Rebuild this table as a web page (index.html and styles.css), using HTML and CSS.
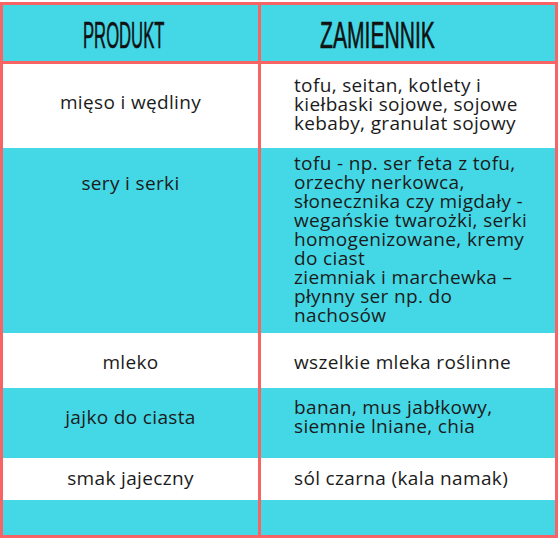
FILE: index.html
```html
<!DOCTYPE html>
<html lang="pl">
<head>
<meta charset="utf-8">
<link rel="stylesheet" href="styles.css">
</head>
<body>
<div class="table">
  <div class="row head">
    <div class="cell left"><span class="title title-produkt">PRODUKT</span></div>
    <div class="cell right"><span class="title title-zam">ZAMIENNIK</span></div>
  </div>
  <div class="row white r1">
    <div class="cell left center">mięso i wędliny</div>
    <div class="cell right">tofu, seitan, kotlety i<br>kiełbaski sojowe, sojowe<br>kebaby, granulat sojowy</div>
  </div>
  <div class="row cyan r2">
    <div class="cell left top">sery i serki</div>
    <div class="cell right">tofu - np. ser feta z tofu,<br>orzechy nerkowca,<br>słonecznika czy migdały -<br>wegańskie twarożki, serki<br>homogenizowane, kremy<br>do ciast<br>ziemniak i marchewka –<br>płynny ser np. do<br>nachosów</div>
  </div>
  <div class="row white r3">
    <div class="cell left center">mleko</div>
    <div class="cell right">wszelkie mleka roślinne</div>
  </div>
  <div class="row cyan r4">
    <div class="cell left center">jajko do ciasta</div>
    <div class="cell right">banan, mus jabłkowy,<br>siemnie lniane, chia</div>
  </div>
  <div class="row white r5">
    <div class="cell left center">smak jajeczny</div>
    <div class="cell right">sól czarna (kala namak)</div>
  </div>
  <div class="row cyan r6">
    <div class="cell left"></div>
    <div class="cell right"></div>
  </div>
</div>
</body>
</html>
```
FILE: styles.css
```css
html, body {
  margin: 0;
  padding: 0;
  background: #ffffff;
}
body {
  width: 560px;
  height: 542px;
  overflow: hidden;
  font-family: "Open Sans", Lato, sans-serif;
  color: #1b1b1b;
}
.table {
  margin-top: 2px;
  width: 552px;
  border: 3px solid #f86464;
  display: flex;
  flex-direction: column;
}
.row {
  display: grid;
  grid-template-columns: 258px 291px;
  column-gap: 0;
}
.cell {
  font-size: 19px;
  line-height: 19px;
  letter-spacing: 0.35px;
  white-space: nowrap;
}
.left {
  border-right: 3px solid #f86464;
  text-align: center;
}
.right {
  padding-left: 33px;
  display: flex;
  flex-direction: column;
  justify-content: center;
}
.center {
  display: flex;
  align-items: center;
  justify-content: center;
}
.top {
  padding-top: 26px;
}
.head {
  height: 56px;
  background: #44d8e6;
  border-bottom: 3px solid #f86464;
}
.head .cell {
  display: flex;
  align-items: center;
  justify-content: flex-start;
}
.head .left {
  padding-left: 80px;
}
.head .right {
  flex-direction: row;
  padding-left: 59px;
}
.title {
  display: inline-block;
  font-family: "Liberation Sans", Arial, sans-serif;
  font-weight: normal;
  letter-spacing: 0;
  -webkit-text-stroke: 0.6px #111;
  font-size: 37px;
  line-height: 37px;
  color: #111;
  transform-origin: left center;
  margin-top: 4px;
}
.title-produkt {
  transform: scaleX(0.45);
}
.title-zam {
  transform: scaleX(0.57);
}
.white { background: #ffffff; }
.cyan { background: #44d8e6; }
.r1 { height: 84px; }
.r1 .left { padding-bottom: 8px; }
.r1 .right { padding-bottom: 4px; }
.r2 { height: 185px; }
.r2 .right { justify-content: flex-start; padding-top: 6px; }
.r3 { height: 55px; }
.r3 .left, .r3 .right { padding-top: 4px; }
.r4 { height: 70px; }
.r4 .left { padding-bottom: 12px; }
.r4 .right { padding-bottom: 12px; }
.r5 { height: 42px; }
.r5 .left, .r5 .right { padding-bottom: 2px; }
.r6 { height: 35px; }
```
